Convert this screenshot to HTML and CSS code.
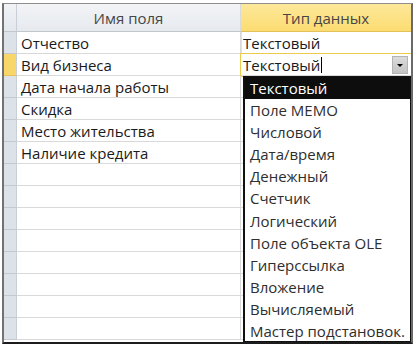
FILE: index.html
```html
<!DOCTYPE html>
<html lang="ru">
<head>
    <meta charset="UTF-8">
    <title>Конструктор таблицы</title>
    <link rel="stylesheet" href="styles.css">
</head>
<body>

    <!-- Design grid -->
    <div class="sheet">
        <div class="row head">
            <div class="sel"></div>
            <div class="cell name">Имя поля</div>
            <div class="cell type">Тип данных</div>
        </div>
        <div class="row">
            <div class="sel"></div>
            <div class="cell name">Отчество</div>
            <div class="cell type">Текстовый</div>
        </div>
        <div class="row current">
            <div class="sel"></div>
            <div class="cell name">Вид бизнеса</div>
            <div class="cell type edit">
                <span>Текстовый</span><span class="caret"></span>
                <span class="drop-btn"></span>
            </div>
        </div>
        <div class="row"><div class="sel"></div><div class="cell name">Дата начала работы</div><div class="cell type"></div></div>
        <div class="row"><div class="sel"></div><div class="cell name">Скидка</div><div class="cell type"></div></div>
        <div class="row"><div class="sel"></div><div class="cell name">Место жительства</div><div class="cell type"></div></div>
        <div class="row"><div class="sel"></div><div class="cell name">Наличие кредита</div><div class="cell type"></div></div>
        <div class="row"><div class="sel"></div><div class="cell name"></div><div class="cell type"></div></div>
        <div class="row"><div class="sel"></div><div class="cell name"></div><div class="cell type"></div></div>
        <div class="row"><div class="sel"></div><div class="cell name"></div><div class="cell type"></div></div>
        <div class="row"><div class="sel"></div><div class="cell name"></div><div class="cell type"></div></div>
        <div class="row"><div class="sel"></div><div class="cell name"></div><div class="cell type"></div></div>
        <div class="row"><div class="sel"></div><div class="cell name"></div><div class="cell type"></div></div>
        <div class="row"><div class="sel"></div><div class="cell name"></div><div class="cell type"></div></div>
        <div class="row"><div class="sel"></div><div class="cell name"></div><div class="cell type"></div></div>

        <!-- Data type dropdown -->
        <ul class="list">
            <li class="picked">Текстовый</li>
            <li>Поле MEMO</li>
            <li>Числовой</li>
            <li>Дата/время</li>
            <li>Денежный</li>
            <li>Счетчик</li>
            <li>Логический</li>
            <li>Поле объекта OLE</li>
            <li>Гиперссылка</li>
            <li>Вложение</li>
            <li>Вычисляемый</li>
            <li>Мастер подстановок.</li>
        </ul>
    </div>

</body>
</html>
```

FILE: styles.css
```css
* {
    box-sizing: border-box;
    margin: 0;
    padding: 0;
}
body {
    background-color: #ffffff;
    font-family: "Open Sans", sans-serif;
    font-size: 15px;
    color: #1a1a1a;
}
.sheet {
    position: relative;
    width: 411px;
    height: 341px;
    margin: 3px 0 0 2px;
    border-top: 1px solid #8e8e8e;
    border-left: 2px solid #727272;
    border-right: 2px solid #6a6a6a;
    border-bottom: 2px solid #1c1c1c;
    overflow: hidden;
}
.row {
    display: grid;
    grid-template-columns: 13px 224px 1fr;
    height: 22px;
}
.sel {
    background-color: #dde2e8;
    border-right: 1px solid #c9cfd7;
    border-bottom: 1px solid #c3c9d1;
}
.cell {
    display: flex;
    align-items: center;
    border-bottom: 1px solid #d9d9d9;
    white-space: nowrap;
    overflow: hidden;
}
.name {
    padding-left: 4px;
    border-right: 1px solid #d9d9d9;
}
.type {
    padding-left: 2px;
}
/* Header row */
.head {
    height: 28px;
}
.head .sel {
    background: linear-gradient(#f1f3f6, #e3e7ec);
    border-bottom: 1px solid #c2c7ce;
}
.head .cell {
    justify-content: center;
    padding-left: 0;
    color: #464646;
    background: linear-gradient(#f2f4f6, #e6e9ee);
    border-bottom: 1px solid #c2c7ce;
}
.head .type {
    background: linear-gradient(#fde89a, #fcdc72);
    border-bottom: 1px solid #e2c25a;
}
.row:nth-child(2) .type {
    border-left: 1px solid #f3e2a0;
    padding-left: 1px;
}
/* Current row */
.current .sel {
    background-color: #f8d66a;
    border-bottom-color: #e8c458;
}
.edit {
    outline: 1px solid #eccb4c;
    padding-right: 3px;
}
.caret {
    width: 1px;
    height: 16px;
    margin-left: 1px;
    background-color: #000;
}
.drop-btn {
    position: relative;
    width: 16px;
    height: 18px;
    margin-left: auto;
    background: linear-gradient(#dcdcdc, #c4c4c4);
    border: 1px solid #b4b4b4;
}
.drop-btn::after {
    content: "";
    position: absolute;
    left: 4px;
    top: 7px;
    border-left: 3px solid transparent;
    border-right: 3px solid transparent;
    border-top: 3px solid #000;
}
/* Dropdown list */
.list {
    position: absolute;
    left: 239px;
    top: 72px;
    right: 0;
    bottom: 0;
    list-style: none;
    background-color: #ffffff;
    border: 1px solid #111;
    border-left-width: 2px;
}
.list li {
    height: 22.1px;
    line-height: 22px;
    padding-left: 5px;
    color: #2e2e2e;
    white-space: nowrap;
}
.list .picked {
    background-color: #0d0d0d;
    color: #ffffff;
}
```
